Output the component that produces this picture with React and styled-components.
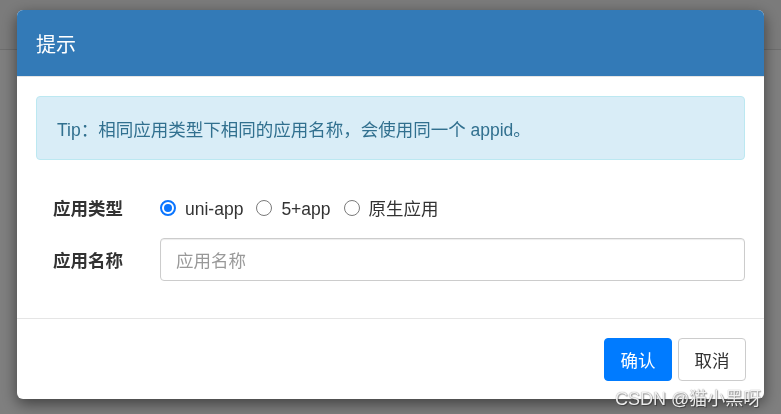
import React from "react";
import styled, { createGlobalStyle } from "styled-components";

const Global = createGlobalStyle`
  html, body { margin: 0; padding: 0; }
  body {
    width: 781px;
    height: 414px;
    overflow: hidden;
    background: #ffffff;
    font-family: "Liberation Sans", "Noto Sans CJK SC", sans-serif;
  }
`;

const Page = styled.div`
  width: 781px;
  height: 414px;
  background: #ffffff;
`;

const Navbar = styled.div`
  height: 49px;
  background: #f6f6f6;
  border-bottom: 1px solid #dcdcdc;
`;

const Backdrop = styled.div`
  position: fixed;
  inset: 0;
  background: rgba(0, 0, 0, 0.5);
  display: flex;
  align-items: flex-start;
  padding: 10px 0 0 17px;
`;

const Dialog = styled.div`
  width: 747px;
  height: 389px;
  background: #fff;
  border-radius: 6px;
  box-shadow: 0 5px 15px rgba(0, 0, 0, 0.5);
  display: flex;
  flex-direction: column;
  overflow: hidden;
`;

const Header = styled.div`
  height: 67px;
  background: #337ab7;
  border-bottom: 1px solid #e5e5e5;
  display: flex;
  align-items: center;
  padding: 0 19px;
  box-sizing: border-box;
  flex: none;
`;

const Title = styled.h4`
  margin: 0;
  font-weight: normal;
  font-size: 20px;
  color: #fff;
  font-family: "Noto Sans CJK SC", sans-serif;
`;

const Body = styled.div`
  padding: 19px 19px 0 19px;
  flex: none;
  height: 242px;
  box-sizing: border-box;
  border-bottom: 1px solid #e5e5e5;
`;

const Alert = styled.div`
  height: 64px;
  box-sizing: border-box;
  background: #d9edf7;
  border: 1px solid #bce8f1;
  border-radius: 4px;
  color: #31708f;
  font-size: 17.5px;
  display: flex;
  align-items: center;
  padding: 0 20px;
`;

const Form = styled.div`
  margin-top: 26px;
  padding: 0 0 0 17px;
  display: flex;
  flex-direction: column;
  gap: 9px;
`;

const Row = styled.div`
  display: flex;
  align-items: center;
  height: 43px;
`;

const Label = styled.div`
  width: 107px;
  flex: none;
  font-weight: bold;
  font-size: 17.5px;
  color: #333;
  font-family: "Noto Sans CJK SC", sans-serif;
`;

const RadioGroup = styled.div`
  display: flex;
  align-items: center;
  gap: 13px;
`;

const RadioOption = styled.label`
  display: flex;
  align-items: center;
  gap: 9px;
  font-size: 17.5px;
  color: #333;
`;

const RadioText = styled.span`
  display: block;
  height: 26px;
  line-height: 26px;
  font-family: ${(p) => (p.$cjk ? `"Noto Sans CJK SC", sans-serif` : `"Liberation Sans", sans-serif`)};
  position: relative;
  top: ${(p) => (p.$cjk ? "0" : "1px")};
`;

const RadioDot = styled.span`
  width: 16px;
  height: 16px;
  box-sizing: border-box;
  border-radius: 50%;
  border: ${(p) => (p.$checked ? "2px solid #0a75ff" : "1.5px solid #7a7a7a")};
  background: #fff;
  display: flex;
  align-items: center;
  justify-content: center;
  &::after {
    content: "";
    width: 8px;
    height: 8px;
    border-radius: 50%;
    background: ${(p) => (p.$checked ? "#0a75ff" : "transparent")};
  }
`;

const Input = styled.input`
  width: 585px;
  height: 43px;
  box-sizing: border-box;
  border: 1px solid #ccc;
  border-radius: 4px;
  padding: 0 15px;
  font-size: 17.5px;
  font-family: "Noto Sans CJK SC", sans-serif;
  color: #333;
  box-shadow: inset 0 1px 1px rgba(0, 0, 0, 0.075);
  &::placeholder { color: #999; }
`;

const Footer = styled.div`
  display: flex;
  justify-content: flex-end;
  gap: 6px;
  padding: 19px 18px 0 0;
  flex: 1;
`;

const Button = styled.button`
  height: 43px;
  width: 68px;
  padding: 0;
  border-radius: 4px;
  font-size: 17.5px;
  font-family: "Noto Sans CJK SC", sans-serif;
  border: 1px solid ${(p) => (p.$primary ? "#007bff" : "#ccc")};
  background: ${(p) => (p.$primary ? "#007bff" : "#fff")};
  color: ${(p) => (p.$primary ? "#fff" : "#333")};
`;

const Watermark = styled.div`
  position: fixed;
  left: 615px;
  top: 384px;
  font-size: 18px;
  color: rgba(255, 255, 255, 0.9);
  text-shadow: 0 0 1px rgba(0, 0, 0, 0.55), 1px 1px 1px rgba(0, 0, 0, 0.35);
  font-family: "Liberation Sans", "Noto Sans CJK SC", sans-serif;
  white-space: nowrap;
`;

export default function App() {
  return (
    <Page>
      <Global />
      <Navbar />
      <Backdrop>
        <Dialog>
          <Header>
            <Title>提示</Title>
          </Header>
          <Body>
            <Alert>Tip：相同应用类型下相同的应用名称，会使用同一个 appid。</Alert>
            <Form>
              <Row>
                <Label>应用类型</Label>
                <RadioGroup>
                  <RadioOption>
                    <RadioDot $checked />
                    <RadioText>uni-app</RadioText>
                  </RadioOption>
                  <RadioOption>
                    <RadioDot />
                    <RadioText>5+app</RadioText>
                  </RadioOption>
                  <RadioOption>
                    <RadioDot />
                    <RadioText $cjk>原生应用</RadioText>
                  </RadioOption>
                </RadioGroup>
              </Row>
              <Row>
                <Label>应用名称</Label>
                <Input placeholder="应用名称" />
              </Row>
            </Form>
          </Body>
          <Footer>
            <Button $primary>确认</Button>
            <Button>取消</Button>
          </Footer>
        </Dialog>
      </Backdrop>
      <Watermark>CSDN @猫小黑呀</Watermark>
    </Page>
  );
}
